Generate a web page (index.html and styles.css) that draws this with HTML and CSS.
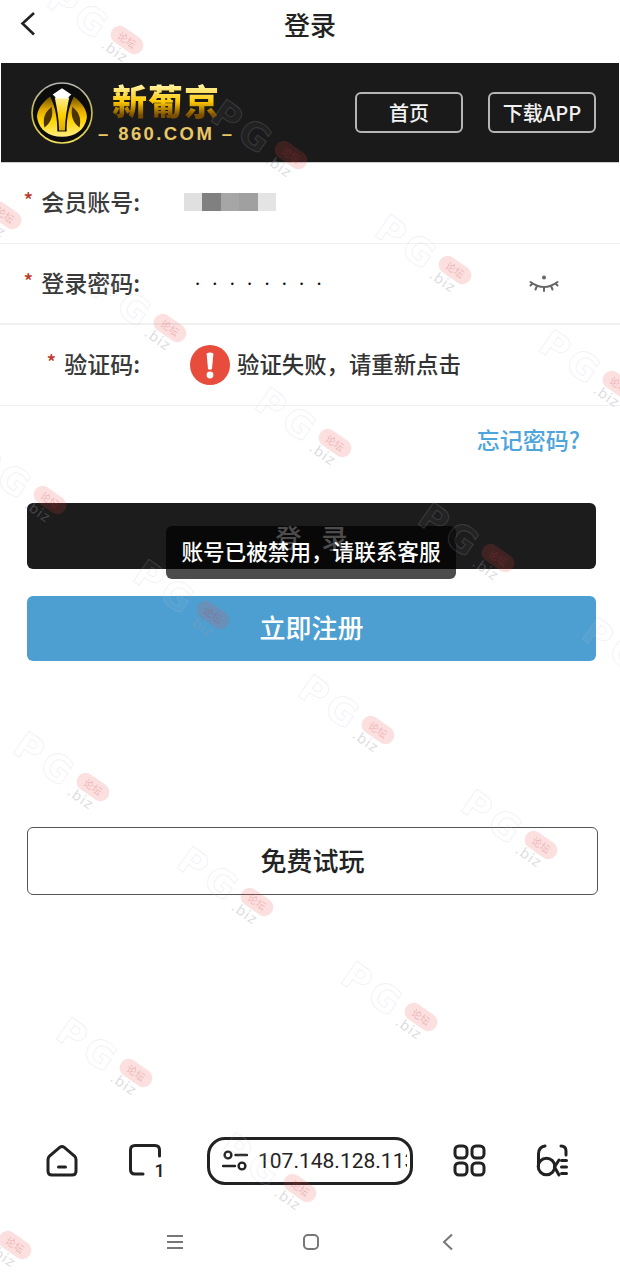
FILE: index.html

```html
<!DOCTYPE html>
<html>
<head>
  <meta charset="UTF-8">
  <title>登录</title>
  <link rel="stylesheet" href="styles.css">
</head>
<body>

<div class="page">
  <div class="topbar">
    <svg class="back" width="20" height="28" viewBox="0 0 20 28"><polyline points="15,2 3.5,12.5 15,23.5"/></svg>
    <div class="title">登录</div>
  </div>

  <div class="brand">
    <div class="logo">
      <svg width="62" height="62" viewBox="0 0 60 60">
        <defs>
          <linearGradient id="ring" x1="0" y1="0" x2="0" y2="1">
            <stop offset="0" stop-color="#b5b5b5"/>
            <stop offset="0.5" stop-color="#c9b84a"/>
            <stop offset="1" stop-color="#efe05a"/>
          </linearGradient>
          <linearGradient id="gold" gradientUnits="userSpaceOnUse" x1="0" y1="12" x2="0" y2="54">
            <stop offset="0" stop-color="#5a4200"/>
            <stop offset="0.35" stop-color="#e0a800"/>
            <stop offset="0.6" stop-color="#ffd400"/>
            <stop offset="1" stop-color="#fff08a"/>
          </linearGradient>
          <linearGradient id="pale" gradientUnits="userSpaceOnUse" x1="0" y1="14" x2="0" y2="50">
            <stop offset="0" stop-color="#fff0a0"/>
            <stop offset="0.5" stop-color="#ffd000"/>
            <stop offset="1" stop-color="#d8a400"/>
          </linearGradient>
        </defs>
        <circle cx="30" cy="30" r="29" fill="#0c0c0c" stroke="url(#ring)" stroke-width="1.6"/>
        <path d="M18.5 14 C10 20 5 29 6 35 C8 46 17 53 30 53 C43 53 52 46 54 35 C55 29 50 20 41.5 14 C36 25 34.5 36 34.5 48 L25.5 48 C25.5 36 24 25 18.5 14Z" fill="url(#gold)"/>
        <path d="M23 15 L37 15 C35 25 33 35 32.8 47 L27.2 47 C27 35 25 25 23 15Z" fill="url(#pale)"/>
        <path d="M13 44 C11 34 14 29 20 24 C22 33 19 40 13 44Z M47 44 C49 34 46 29 40 24 C38 33 41 40 47 44Z" fill="#4a3400"/>
        <path d="M30 6 L39 12 L35 16 L25 16 L21 12Z" fill="#fff"/>
      </svg>
      <div class="logo-text">
        <div class="logo-name">新葡京</div>
        <div class="logo-site">– 860.COM –</div>
      </div>
    </div>
    <div class="brand-links">
      <a class="brand-btn">首页</a>
      <a class="brand-btn">下载APP</a>
    </div>
  </div>

  <div class="form-row thin">
    <div class="label"><span class="req">*</span>会员账号:</div>
    <div class="mosaic">
      <span class="m1"></span><span class="m2"></span><span class="m3"></span><span class="m4"></span><span class="m5"></span>
    </div>
  </div>
  <div class="form-row">
    <div class="label"><span class="req">*</span>登录密码:</div>
    <div class="pwd">••••••••</div>
    <svg class="eye" width="30" height="18" viewBox="0 0 30 18">
      <circle cx="15" cy="2.5" r="2"/>
      <path d="M1.5 7 Q15 17 28.5 7 M8 11 L6.5 14.5 M15 12.5 V16 M22 11 L23.5 14.5 M3.5 8.5 L1.5 10.5 M26.5 8.5 L28.5 10.5"/>
    </svg>
  </div>
  <div class="form-row thin">
    <div class="label"><span class="req">*</span>验证码:</div>
    <div class="verify">
      <svg width="40" height="40" viewBox="0 0 40 40">
        <circle cx="20" cy="20" r="20" fill="#e74c3c"/>
        <path d="M16.6 8.5 Q20 6.5 23.4 8.5 L22 24 Q20 25.5 18 24Z" fill="#fff"/>
        <circle cx="20" cy="30" r="3.4" fill="#fff"/>
      </svg>
      <span class="verify-text">验证失败&#xFF0C;请重新点击</span>
    </div>
  </div>

  <div class="forgot">忘记密码?</div>

  <div class="actions">
    <a class="btn btn-dark"><span>登</span><span>录</span></a>
    <a class="btn btn-blue">立即注册</a>
  </div>
  <a class="btn btn-line">免费试玩</a>

  <div class="toast">账号已被禁用&#xFF0C;请联系客服</div>

  <div class="toolbar">
    <svg class="tool" width="34" height="34" viewBox="0 0 34 34">
      <path d="M14 3.2 L3.5 12 Q2 13.5 2 15.5 V27 Q2 31 6 31 H26 Q30 31 30 27 V15.5 Q30 13.5 28.5 12 L18 3.2 Q16 1.8 14 3.2Z"/>
      <path d="M12.5 23 H19.5"/>
    </svg>
    <svg class="tool" width="36" height="36" viewBox="0 0 36 36">
      <path d="M15 31 H7 Q2.5 31 2.5 26.5 V7 Q2.5 2.5 7 2.5 H27 Q31.5 2.5 31.5 7 V13"/>
      <text class="tab-count" x="26.5" y="33.5">1</text>
    </svg>
    <div class="url">
      <svg class="tool" width="26" height="22" viewBox="0 0 26 22">
        <circle cx="6" cy="5" r="3.4"/><path d="M13.5 5 H25 M1 16 H13"/><circle cx="20" cy="16" r="3.4"/>
      </svg>
      <span class="url-text">107.148.128.113</span>
    </div>
    <svg class="tool" width="34" height="34" viewBox="0 0 34 34">
      <rect x="2" y="2" width="12" height="12" rx="4"/><rect x="19" y="2" width="12" height="12" rx="4"/>
      <rect x="2" y="19" width="12" height="12" rx="4"/><rect x="19" y="19" width="12" height="12" rx="4"/>
    </svg>
    <svg class="tool" width="34" height="34" viewBox="0 0 34 34">
      <path d="M9 2 Q2.5 3 2.5 10 V22"/>
      <circle cx="10.5" cy="22.5" r="8.3"/>
      <path d="M23 16 L18.5 23 L23 31"/>
      <path d="M25 2 Q30 2 30 7 V11 M25.5 16.5 H30.5 M25.5 23 H30.5 M25.5 29.5 H30.5"/>
    </svg>
  </div>

  <div class="navbar">
    <svg width="16" height="16" viewBox="0 0 16 16"><path d="M0 2 H16 M0 8 H16 M0 14 H16"/></svg>
    <svg width="16" height="16" viewBox="0 0 16 16"><rect x="1" y="1" width="14" height="14" rx="4"/></svg>
    <svg class="nav-back" width="12" height="18" viewBox="0 0 12 18"><polyline points="10,1.5 2,9 10,16.5"/></svg>
  </div>

  <div id="marks"></div>
</div>

<script src="marks.js"></script>
</body>
</html>
```

FILE: styles.css

```css
* {
  box-sizing: border-box;
}
body {
  margin: 0;
  background: #fff;
  color: #333;
  font-family: "Noto Sans CJK SC", "Noto Sans", sans-serif;
  font-weight: 500;
}
.page {
  position: relative;
  display: flex;
  flex-direction: column;
  height: 1280px;
  overflow: hidden;
}

/* top bar */
.topbar {
  display: grid;
  grid-template-columns: 60px 1fr 60px;
  align-items: center;
  height: 63px;
  padding-bottom: 13px;
}
.back {
  margin: 0 0 1px 19px;
}
.back polyline {
  fill: none;
  stroke: #222;
  stroke-width: 2.6;
}
.title {
  margin-bottom: 3px;
  font-size: 26px;
  line-height: 47px;
  color: #222;
  text-align: center;
}

/* black brand strip */
.brand {
  display: flex;
  align-items: center;
  justify-content: space-between;
  height: 100px;
  margin: 0 1px;
  padding: 0 23px 0 30px;
  background: #1a1a1a;
  border-bottom: 1px solid #ccc;
}
.logo {
  display: flex;
  align-items: center;
  gap: 5px;
}
.logo-text {
  width: 136px;
  text-align: center;
}
.logo-name {
  margin-top: -1px;
  font-size: 35px;
  font-weight: 900;
  line-height: 38px;
  letter-spacing: 1px;
  background: linear-gradient(#fff4a8 10%, #ffc800 55%, #7a4c00 90%);
  -webkit-background-clip: text;
  background-clip: text;
  color: transparent;
}
.logo-site {
  margin-top: 5px;
  font-family: "Liberation Sans", sans-serif;
  font-size: 18.5px;
  font-weight: 700;
  line-height: 20px;
  letter-spacing: 2.4px;
  white-space: pre;
  color: #e9c766;
}
.brand-links {
  display: flex;
  gap: 25px;
}
.brand-btn {
  width: 108px;
  height: 41px;
  border: 2px solid #b5b5b5;
  border-radius: 6px;
  color: #f2f2f2;
  font-size: 20px;
  line-height: 37px;
  text-align: center;
}

/* form */
.form-row {
  display: flex;
  align-items: center;
  height: 81px;
  border-bottom: 2px solid #f1f1f1;
  color: #3a3a3a;
  font-size: 23px;
}
.form-row.thin {
  border-bottom-width: 1px;
}
.label {
  width: 140px;
  margin-bottom: 4px;
  text-align: right;
  white-space: nowrap;
}
.req {
  margin-right: 8px;
  color: #c0392b;
  font-size: 20px;
  vertical-align: 3px;
}
.mosaic {
  display: flex;
  margin: 0 0 2px 44px;
}
.mosaic span {
  width: 18.4px;
  height: 18px;
}
.m1 { background: #e0e0e0; }
.m2 { background: #808080; }
.m3 { background: #a6a6a6; }
.m4 { background: #a0a0a0; }
.m5 { background: #e4e4e4; }
.pwd {
  margin-left: 56px;
  font-family: "Liberation Sans", sans-serif;
  font-size: 9px;
  letter-spacing: 14.2px;
  color: #111;
  white-space: nowrap;
}
.eye {
  margin: 0 61px 0 auto;
}
.eye circle {
  fill: #666;
}
.eye path {
  fill: none;
  stroke: #666;
  stroke-width: 2;
  stroke-linecap: round;
}
.verify {
  display: flex;
  align-items: center;
  gap: 7px;
  margin-left: 50px;
  font-size: 22.4px;
  color: #333;
}
.verify-text {
  margin-bottom: 4px;
}
.forgot {
  margin: 8px 40px 2px 0;
  font-size: 23px;
  line-height: 50px;
  color: #4ea5dc;
  text-align: right;
}

/* buttons */
.actions {
  display: flex;
  flex-direction: column;
  gap: 27px;
  margin: 37px 24px 0 27px;
}
.btn {
  display: flex;
  align-items: center;
  justify-content: center;
  height: 66px;
  padding-bottom: 4px;
  border-radius: 6px;
  font-size: 26px;
}
.btn-dark {
  gap: 20px;
  padding-bottom: 0;
  background: #1c1c1c;
  color: #fff;
}
.btn-blue {
  height: 65px;
  background: #4e9fd1;
  color: #fff;
}
.btn-line {
  height: 68px;
  margin: 166px 22px 0 27px;
  border: 1.5px solid #555;
  color: #222;
}
.toast {
  position: absolute;
  left: 166px;
  top: 526px;
  width: 290px;
  height: 53px;
  border-radius: 6px;
  background: rgba(0, 0, 0, 0.7);
  color: #fff;
  font-size: 21.6px;
  line-height: 50px;
  text-align: center;
}

/* browser toolbar */
.toolbar {
  display: grid;
  grid-template-columns: 82px 79px 246px 83px 34px;
  align-items: center;
  height: 48px;
  margin-top: auto;
  padding-left: 46px;
}
.tool {
  fill: none;
  stroke: #222;
  stroke-width: 3;
  stroke-linecap: round;
}
.tab-count {
  fill: #222;
  stroke: none;
  font-family: Roboto, sans-serif;
  font-size: 18px;
  font-weight: 500;
}
.url {
  display: flex;
  align-items: center;
  gap: 10px;
  width: 206px;
  height: 48px;
  padding: 0 3px 0 12px;
  border: 3px solid #222;
  border-radius: 18px;
}
.url .tool {
  flex: none;
  stroke-width: 2.4;
}
.url-text {
  flex: 1;
  min-width: 0;
  overflow: hidden;
  font-family: Roboto, sans-serif;
  font-size: 21px;
  font-weight: 400;
  color: #222;
  white-space: nowrap;
}

/* android nav */
.navbar {
  display: flex;
  align-items: center;
  justify-content: center;
  gap: 120px;
  height: 95px;
  padding-top: 19px;
}
.navbar svg {
  fill: none;
  stroke: #777;
  stroke-width: 2;
}
.nav-back {
  margin-left: 3px;
}

/* forum watermark */
.mark {
  position: absolute;
  display: flex;
  transform-origin: 0 0;
  transform: rotate(35deg) translate(-88px, -14px);
  pointer-events: none;
  font-family: "DejaVu Sans", sans-serif;
}
.mark-pg {
  width: 70px;
  font-size: 37px;
  font-weight: 700;
  line-height: 40px;
  letter-spacing: 5px;
  white-space: nowrap;
  color: rgba(255, 255, 255, 0.03);
  -webkit-text-stroke: 1px rgba(190, 190, 210, 0.2);
}
.mark-side {
  margin-top: 5px;
}
.mark-pill {
  width: 36px;
  height: 18px;
  border-radius: 9px;
  background: rgba(238, 70, 70, 0.17);
  color: rgba(200, 50, 50, 0.22);
  font-family: "Noto Sans CJK SC", sans-serif;
  font-size: 10px;
  line-height: 18px;
  text-align: center;
}
.mark-biz {
  font-size: 14px;
  line-height: 15px;
  letter-spacing: 1px;
  color: rgba(150, 150, 165, 0.35);
}
```

FILE: marks.js

```js
// where the red pill of each watermark sits
var spots = [
  [127, 40], [291, 155], [5, 215], [455, 270], [170, 328], [619, 385],
  [335, 443], [50, 500], [498, 558], [213, 615], [662, 673], [378, 730],
  [93, 787], [541, 845], [257, 902], [421, 1017], [136, 1073], [300, 1188],
  [15, 1245]
];

var box = document.getElementById("marks");
spots.forEach(function (s) {
  var el = document.createElement("div");
  el.className = "mark";
  el.style.left = s[0] + "px";
  el.style.top = s[1] + "px";
  el.innerHTML = '<div class="mark-pg">PG</div>' +
    '<div class="mark-side"><div class="mark-pill">论坛</div><div class="mark-biz">.biz</div></div>';
  box.appendChild(el);
});
```
